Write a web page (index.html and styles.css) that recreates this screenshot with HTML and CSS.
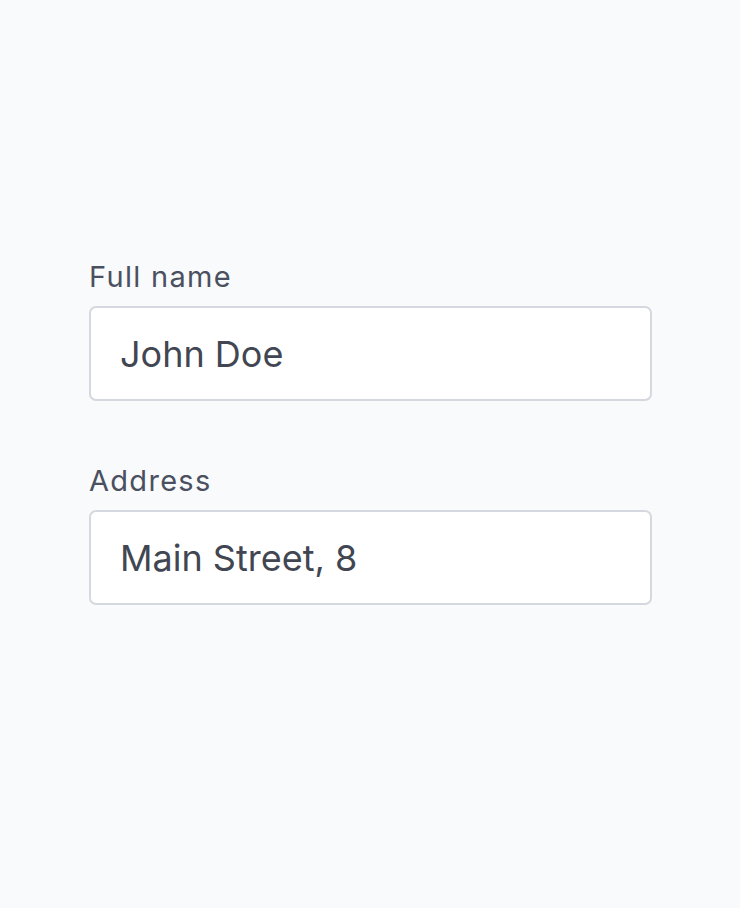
FILE: index.html
```html
<!DOCTYPE html>
<html>
<head>
<meta charset="utf-8">
<link rel="stylesheet" href="styles.css">
</head>
<body>
<form class="form">
  <div class="field">
    <label class="label" for="name">Full name</label>
    <input class="input" id="name" type="text" value="John Doe">
  </div>
  <div class="field">
    <label class="label" for="addr">Address</label>
    <input class="input" id="addr" type="text" value="Main Street, 8">
  </div>
</form>
</body>
</html>
```
FILE: styles.css
```css
html, body {
  margin: 0;
  padding: 0;
  background: #f9fafb;
  font-family: Inter, "Noto Sans", sans-serif;
}
.form {
  display: flex;
  flex-direction: column;
  gap: 60px;
  padding: 257px 0 0 89px;
  width: 563px;
}
.field {
  display: flex;
  flex-direction: column;
}
.label {
  font-size: 29px;
  line-height: 40px;
  letter-spacing: 1.3px;
  color: #4b5060;
  margin-bottom: 9px;
}
.input {
  box-sizing: border-box;
  width: 563px;
  height: 95px;
  border: 2px solid #d5d8df;
  border-radius: 7px;
  background: #fff;
  padding: 0 29px;
  font-family: Inter, "Noto Sans", sans-serif;
  font-size: 36px;
  color: #414652;
  outline: none;
}
```
